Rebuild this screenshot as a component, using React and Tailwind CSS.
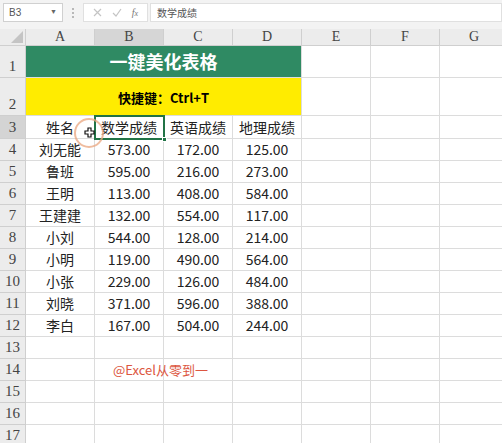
import React from "react";

const cols = ["A", "B", "C", "D", "E", "F", "G"];

const data = [
  ["刘无能", "573.00", "172.00", "125.00"],
  ["鲁班", "595.00", "216.00", "273.00"],
  ["王明", "113.00", "408.00", "584.00"],
  ["王建建", "132.00", "554.00", "117.00"],
  ["小刘", "544.00", "128.00", "214.00"],
  ["小明", "119.00", "490.00", "564.00"],
  ["小张", "229.00", "126.00", "484.00"],
  ["刘晓", "371.00", "596.00", "388.00"],
  ["李白", "167.00", "504.00", "244.00"],
];

const cjk = "font-['Noto_Sans_CJK_SC','Noto_Sans',sans-serif]";
const serif = "font-['Liberation_Serif',serif]";

function RowHead({ n, h, active, bottom }) {
  return (
    <div
      className={`w-[26px] shrink-0 flex justify-center border-r border-b border-[#cfcfcf] text-[15px] leading-none text-[#444] ${serif} ${
        bottom ? "items-end pb-[3px]" : "items-center"
      } ${active ? "bg-[#d4d4d4]" : "bg-[#ececec]"}`}
      style={{ height: h }}
    >
      {n}
    </div>
  );
}

function Cell({ children, w = "w-[69px]", className = "" }) {
  return (
    <div
      className={`${w} shrink-0 h-full border-r border-b border-[#dcdcdc] flex items-center justify-center ${className}`}
    >
      {children}
    </div>
  );
}

export default function App() {
  return (
    <div className="relative w-[502px] h-[443px] overflow-hidden bg-white">
      {/* formula bar */}
      <div className="h-[29px] bg-[#f3f3f3] flex items-start pt-[3px] pl-[3px]">
        <div className="w-[60px] h-[19px] bg-white border border-[#d0d0d0] flex items-center justify-between px-[5px] text-[10px] text-[#555] font-['Liberation_Sans',sans-serif]">
          <span>B3</span>
          <span className="text-[7px] text-[#666]">▼</span>
        </div>
        <div className="w-[20px] h-[19px] flex items-center justify-center">
          <div className="flex flex-col gap-[2px]">
            <span className="w-[2px] h-[2px] bg-[#b8b8b8]" />
            <span className="w-[2px] h-[2px] bg-[#b8b8b8]" />
            <span className="w-[2px] h-[2px] bg-[#b8b8b8]" />
          </div>
        </div>
        <div className="w-[65px] h-[19px] bg-white border border-[#e0e0e0] flex items-center justify-around px-[4px]">
          <svg width="9" height="9" viewBox="0 0 9 9" stroke="#c4c4c4" strokeWidth="1.2">
            <path d="M1 1L8 8M8 1L1 8" />
          </svg>
          <svg width="10" height="9" viewBox="0 0 10 9" fill="none" stroke="#c4c4c4" strokeWidth="1.2">
            <path d="M1 5L4 8L9 1" />
          </svg>
          <span className={`text-[10px] italic text-[#777] ${serif}`}>
            f<span className="text-[8px]">x</span>
          </span>
        </div>
        <div className="ml-[2px] flex-1 h-[19px] bg-white border border-[#e0e0e0] flex items-center pl-[6px] text-[10px] text-[#555] font-['Noto_Sans_CJK_SC',sans-serif]">
          数学成绩
        </div>
      </div>

      {/* column headers */}
      <div className="flex h-[17px] bg-[#ececec]">
        <div className="relative w-[26px] shrink-0 border-r border-b border-[#cfcfcf]">
          <div className="absolute right-[2px] bottom-[2px] w-0 h-0 border-l-[12px] border-l-transparent border-b-[12px] border-b-[#c4c4c4]" />
        </div>
        {cols.map((c) => (
          <div
            key={c}
            className={`w-[69px] shrink-0 border-r border-b border-[#cfcfcf] flex items-center justify-center text-[14px] leading-none text-[#444] ${serif} ${
              c === "B" ? "bg-[#d6d6d6]" : ""
            }`}
          >
            {c}
          </div>
        ))}
      </div>

      {/* row 1 */}
      <div className="flex h-[32px]">
        <RowHead n={1} h={32} bottom />
        <Cell w="w-[276px]" className={`bg-[#2f8a63] text-white font-bold text-[18px] ${cjk}`}>
          一键美化表格
        </Cell>
        <Cell />
        <Cell />
        <Cell />
      </div>

      {/* row 2 */}
      <div className="flex h-[38px]">
        <RowHead n={2} h={38} bottom />
        <Cell w="w-[276px]" className={`bg-[#ffec00] text-black font-bold text-[13px] !items-end pb-[8px] ${cjk}`}>
          快捷键：Ctrl+T
        </Cell>
        <Cell />
        <Cell />
        <Cell />
      </div>

      {/* row 3 */}
      <div className={`flex h-[23px] text-[14px] text-[#222] ${cjk}`}>
        <RowHead n={3} h={23} active />
        <Cell>姓名</Cell>
        <Cell>数学成绩</Cell>
        <Cell>英语成绩</Cell>
        <Cell>地理成绩</Cell>
        <Cell />
        <Cell />
        <Cell />
      </div>

      {data.map((r, i) => (
        <div key={i} className={`flex h-[22px] text-[14px] text-[#222] ${cjk}`}>
          <RowHead n={i + 4} h={22} />
          {r.map((v, j) => (
            <Cell key={j}>{v}</Cell>
          ))}
          <Cell />
          <Cell />
          <Cell />
        </div>
      ))}

      {[13, 14, 15, 16, 17].map((n) => (
        <div key={n} className={`relative flex h-[22px] ${cjk}`}>
          <RowHead n={n} h={22} />
          {cols.map((c) => (
            <Cell key={c} />
          ))}
          {n === 14 && (
            <span className="absolute left-[113px] top-0 h-full flex items-center text-[13px] text-[#dc5640]">
              @Excel从零到一
            </span>
          )}
        </div>
      ))}

      {/* selected cell B3 */}
      <div className="absolute left-[94px] top-[115px] w-[71px] h-[25px] border-2 border-[#217346]" />
      <div className="absolute left-[162px] top-[137px] w-[5px] h-[5px] bg-[#217346] border border-white" />

      {/* cursor with highlight ring */}
      <svg className="absolute left-[72px] top-[116px]" width="34" height="34" viewBox="0 0 34 34">
        <circle cx="17" cy="17" r="14" fill="none" stroke="#e9a57f" strokeOpacity="0.75" strokeWidth="2" />
        <path
          d="M16 12h3v3h3v3h-3v3h-3v-3h-3v-3h3z"
          fill="#fff"
          stroke="#111"
          strokeWidth="1.2"
        />
      </svg>
    </div>
  );
}
